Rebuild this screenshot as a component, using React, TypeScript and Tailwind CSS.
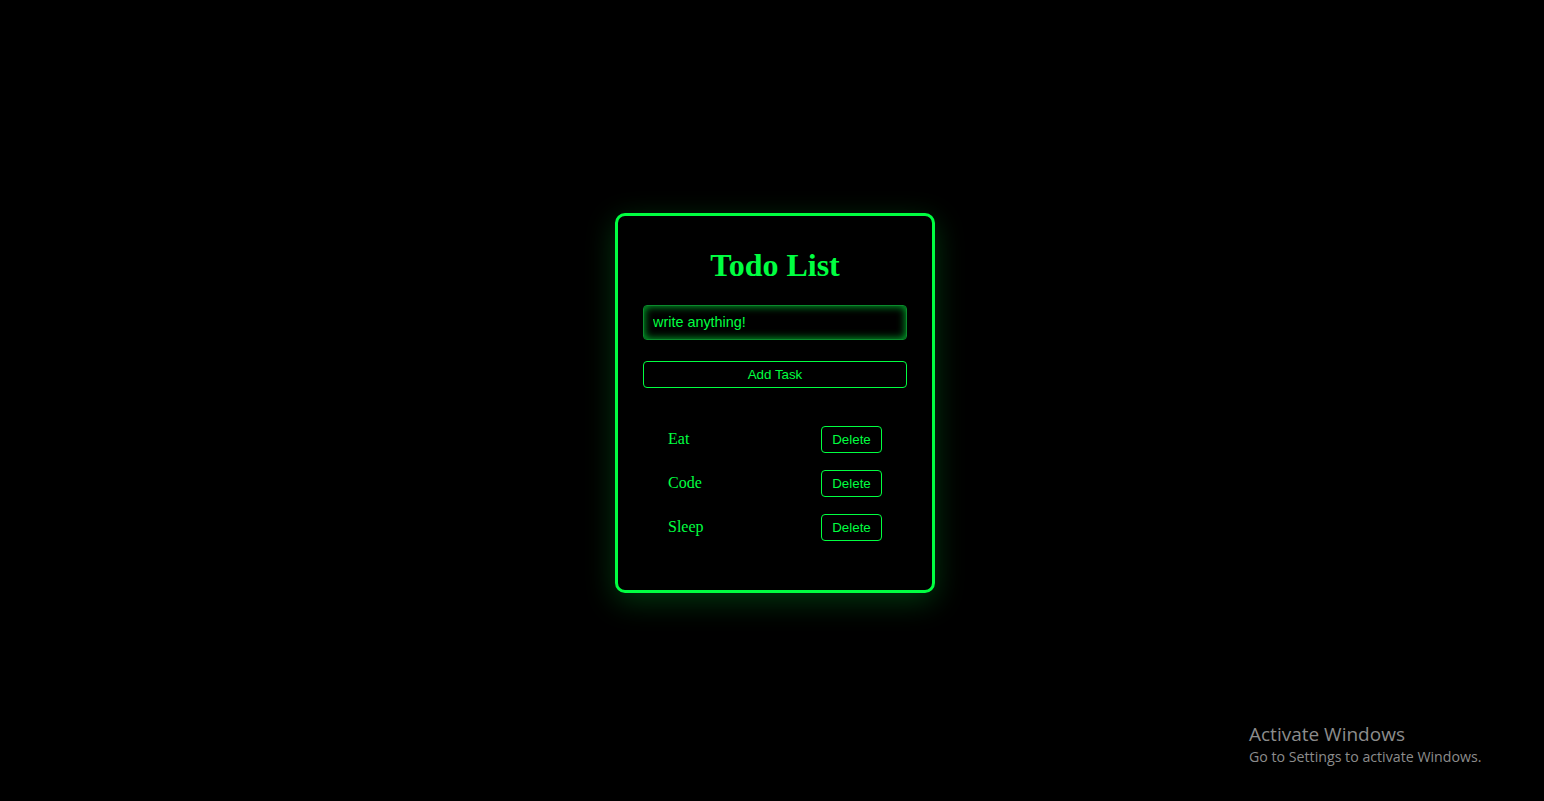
import React from "react";

export default function App() {
  const items = ["Eat", "Code", "Sleep"];
  return (
    <div className="relative w-full h-[801px] bg-black overflow-hidden flex items-center justify-center pl-[6px] pt-[5px]">
      <div className="w-[320px] h-[380px] border-[3px] border-[#00ff41] rounded-[10px] bg-black shadow-[0_8px_30px_rgba(0,255,65,0.22)] px-[25px] pt-[31px] flex flex-col">
        <h1
          className="text-[32px] font-bold text-center text-[#00ff41] leading-[37px]"
          style={{ fontFamily: '"Liberation Serif", "Times New Roman", serif' }}
        >
          Todo List
        </h1>
        <input
          className="mt-[21px] h-[35px] w-full rounded-[4px] border border-[#0b8a2c] bg-black px-[9px] pb-[2px] text-[14.4px] text-[#00ff41] placeholder:text-[#00ff41] outline-none shadow-[inset_0_0_8px_rgba(0,255,65,0.75)]"
          style={{ fontFamily: '"Liberation Sans", Arial, sans-serif' }}
          placeholder="write anything!"
        />
        <button
          className="mt-[21px] h-[27px] w-full rounded-[4px] border border-[#00ff41] bg-black text-[13.33px] text-[#00ff41]"
          style={{ fontFamily: '"Liberation Sans", Arial, sans-serif' }}
        >
          Add Task
        </button>
        <ul className="mt-[38px] flex flex-col gap-[17px] px-[25px]">
          {items.map((t) => (
            <li key={t} className="flex items-center justify-between h-[27px]">
              <span
                className="text-[16px] text-[#00ff41] mb-[1px]"
                style={{ fontFamily: '"Liberation Serif", "Times New Roman", serif' }}
              >
                {t}
              </span>
              <button
                className="h-[27px] w-[61px] rounded-[4px] border border-[#00ff41] bg-black text-[13.33px] text-[#00ff41]"
                style={{ fontFamily: '"Liberation Sans", Arial, sans-serif' }}
              >
                Delete
              </button>
            </li>
          ))}
        </ul>
      </div>
      <div
        className="absolute left-[1249px] top-[721px] text-[#8c8c8c]"
        style={{ fontFamily: '"Open Sans", "Noto Sans", sans-serif' }}
      >
        <div className="text-[19px] leading-[26px]">Activate Windows</div>
        <div className="text-[14.2px] leading-[20px]">Go to Settings to activate Windows.</div>
      </div>
    </div>
  );
}
